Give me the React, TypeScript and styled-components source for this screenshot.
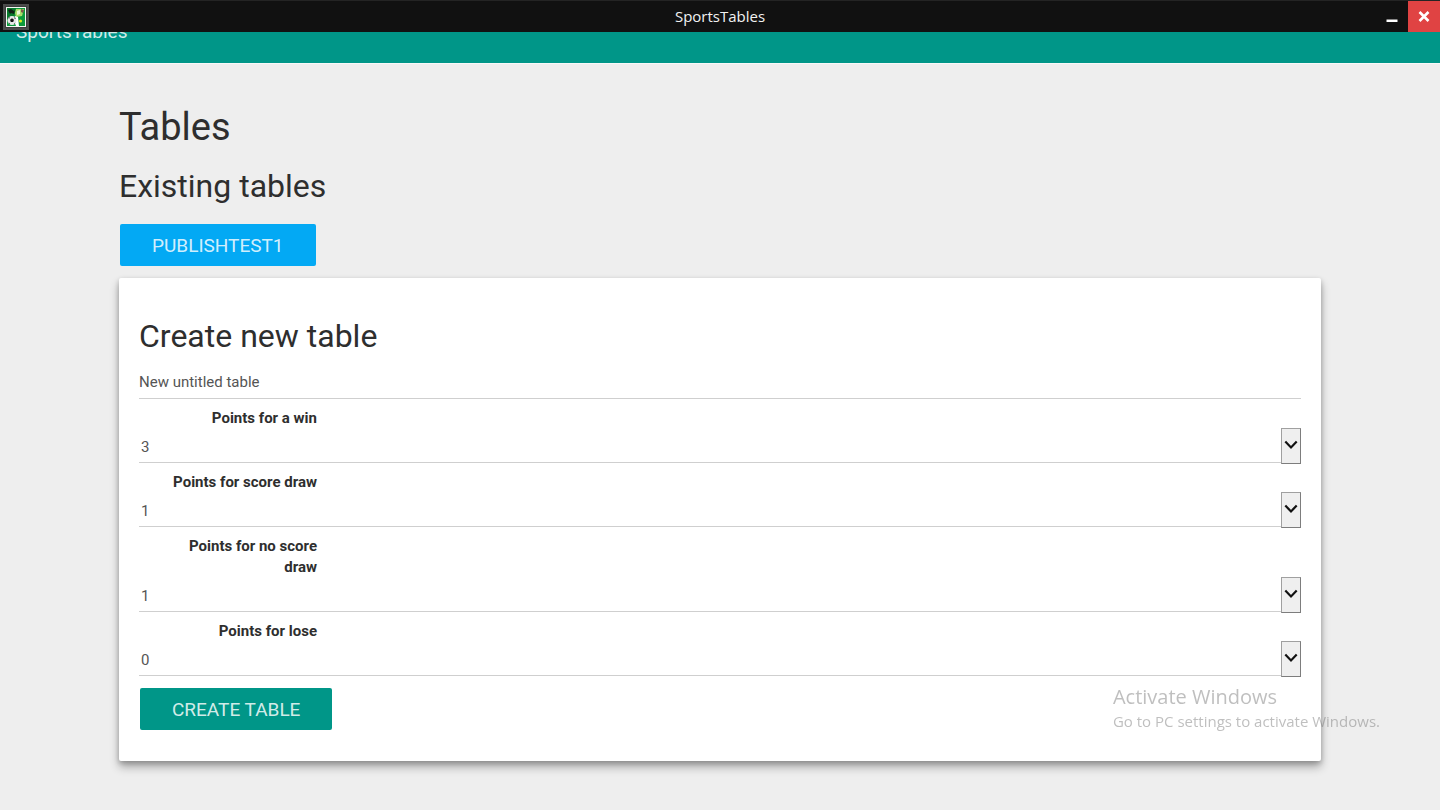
import React, { useId, useState } from "react";
import styled, { createGlobalStyle } from "styled-components";

const GlobalStyle = createGlobalStyle`
  *, *::before, *::after { box-sizing: border-box; }
  body {
    margin: 0;
    background: #eeeeee;
    color: #2e2e2e;
    font-family: Roboto, "Liberation Sans", sans-serif;
    font-size: 15px;
    line-height: 21px;
  }
`;

const TitleBar = styled.div`
  position: fixed;
  top: 0;
  left: 0;
  right: 0;
  z-index: 2;
  height: 32px;
  display: grid;
  grid-template-columns: 1fr auto 1fr;
  align-items: center;
  background: #111111;
  border-top: 1px solid #242424;
`;

const AppIcon = styled.svg`
  display: block;
  width: 26px;
  height: 26px;
  margin-left: 3px;
`;

const WindowTitle = styled.div`
  color: #f2f2f2;
  font-family: "Open Sans", "Noto Sans", sans-serif;
  font-size: 15px;
`;

const WindowControls = styled.div`
  display: flex;
  justify-content: flex-end;
`;

const WindowButton = styled.button<{ $close?: boolean }>`
  display: flex;
  align-items: center;
  justify-content: center;
  width: 32px;
  height: 31px;
  padding: 0;
  border: 0;
  color: #ffffff;
  background: ${(p) => (p.$close ? "#e04343" : "transparent")};
`;

const Header = styled.header`
  display: flex;
  align-items: center;
  height: 64px;
  padding: 0 16px;
  background: #009688;
  border-bottom: 1px solid #f8f8f8;
`;

const Brand = styled.a`
  color: rgba(255, 255, 255, 0.84);
  font-size: 19px;
  text-decoration: none;
`;

const Content = styled.main`
  max-width: 1242px;
  margin: 0 auto;
  padding: 42px 20px 48px;
`;

const PageTitle = styled.h1`
  margin: 0 0 20px;
  font-size: 38px;
  line-height: 42px;
  font-weight: 400;
`;

const SectionTitle = styled.h2`
  margin: 0;
  font-size: 32px;
  line-height: 36px;
  font-weight: 400;
`;

const RaisedButton = styled.button<{ $color: string }>`
  display: block;
  height: 42px;
  margin: 0 1px;
  padding: 0 32px;
  border: 0;
  border-radius: 2px;
  background: ${(p) => p.$color};
  color: rgba(255, 255, 255, 0.84);
  font-family: inherit;
  font-size: 19px;
  text-transform: uppercase;
`;

const TableList = styled.div`
  padding: 20px 0 12px;
`;

const Card = styled.form`
  padding: 40px 20px 31px;
  border-radius: 2px;
  background: #ffffff;
  box-shadow: 0 6px 10px 0 rgba(0, 0, 0, 0.3), 0 2px 5px 0 rgba(0, 0, 0, 0.2);
`;

const NameInput = styled.input`
  display: block;
  width: 100%;
  height: 35px;
  margin-top: 10px;
  padding: 2px 0 0;
  border: 0;
  border-bottom: 1px solid #cfcfcf;
  outline: 0;
  background: transparent;
  color: #555555;
  font-family: inherit;
  font-size: 15px;
`;

const Field = styled.div`
  padding-top: 9px;
`;

const FieldLabel = styled.label`
  display: block;
  width: 178px;
  padding-left: 20px;
  font-weight: 700;
  text-align: right;
`;

const SelectWrap = styled.div`
  position: relative;
`;

const PointsSelect = styled.select`
  display: block;
  appearance: none;
  width: 100%;
  height: 34px;
  padding: 2px 2px 0;
  border: 0;
  border-bottom: 1px solid #cfcfcf;
  border-radius: 0;
  outline: 0;
  background: transparent;
  color: #555555;
  font-family: inherit;
  font-size: 15px;
`;

const SelectArrow = styled.span`
  position: absolute;
  top: -1px;
  right: 0;
  display: flex;
  align-items: center;
  justify-content: center;
  width: 20px;
  height: 36px;
  border: 1px solid #a0a0a0;
  border-right-color: #7d7d7d;
  border-bottom-color: #7d7d7d;
  background: #efefef;
  pointer-events: none;
`;

const Actions = styled.div`
  padding-top: 12px;
`;

const Watermark = styled.aside`
  position: fixed;
  right: 60px;
  bottom: 77px;
  color: rgba(120, 120, 120, 0.47);
  font-family: "Open Sans", "Noto Sans", sans-serif;
  font-size: 15px;
  line-height: 24px;
  pointer-events: none;
`;

const WatermarkTitle = styled.div`
  font-size: 20px;
`;

function PointsField({ label, initial }: { label: string; initial: string }) {
  const id = useId();
  const [value, setValue] = useState(initial);
  return (
    <Field>
      <FieldLabel htmlFor={id}>{label}</FieldLabel>
      <SelectWrap>
        <PointsSelect id={id} value={value} onChange={(e) => setValue(e.target.value)}>
          {["0", "1", "2", "3"].map((n) => (
            <option key={n}>{n}</option>
          ))}
        </PointsSelect>
        <SelectArrow>
          <svg width="14" height="12" viewBox="0 0 14 12" fill="none" aria-hidden="true">
            <path d="M1.3 1.600 7 7.400 12.700 1.600" stroke="#111" strokeWidth="2.2" />
          </svg>
        </SelectArrow>
      </SelectWrap>
    </Field>
  );
}

const fields = [
  { label: "Points for a win", initial: "3" },
  { label: "Points for score draw", initial: "1" },
  { label: "Points for no score draw", initial: "1" },
  { label: "Points for lose", initial: "0" },
];

export default function App() {
  const [name, setName] = useState("New untitled table");
  return (
    <>
      <GlobalStyle />
      <TitleBar>
        <AppIcon viewBox="0 0 26 26" aria-hidden="true">
          <rect width="26" height="26" fill="#4b4b4b" />
          <rect x="2" y="2" width="22" height="22" fill="#3c3c3c" />
          <rect x="3" y="3" width="20" height="20" fill="#f4f8f2" />
          <rect x="4" y="4" width="18" height="18" fill="#0d9a3c" />
          <path d="M4 4h9l-2 9-7 3z" fill="#087a2c" />
          <path d="M13 5h8l-2 7-6 1-1-4z" fill="#a9dc6a" />
          <path d="M5 6l3-1 3 2 1-1-1 4-3-1-1 1z" fill="#102015" />
          <path d="M14 7l3-1v4l-3 1z" fill="#e9f7d6" />
          <path d="M18 5l3 1-1 3-2-1z" fill="#7c5a48" />
          <path d="M12 12l3 1 1 9h-3l-2-5z" fill="#ffffff" />
          <circle cx="9" cy="16.500" r="4.500" fill="#e8e8e8" />
          <path d="M9 14.300l2 1.500-.8 2.300H7.800L7 15.800zM5 14l1.500-1v1.500zM11.500 13l1.500 1.500-1.500.2zM5.500 18.500l1.500.8-.3 1zM12.500 18.500l-1.500 1 .2.800z" fill="#161616" />
          <circle cx="17.500" cy="17" r="1.600" fill="#d8ec1e" />
        </AppIcon>
        <WindowTitle>SportsTables</WindowTitle>
        <WindowControls>
          <WindowButton type="button" aria-label="Minimize">
            <svg width="12" height="12" viewBox="0 0 12 12" aria-hidden="true">
              <path d="M0.500 8.500h11v2.500h-11z" fill="currentColor" />
            </svg>
          </WindowButton>
          <WindowButton type="button" aria-label="Close" $close>
            <svg width="12" height="12" viewBox="0 0 12 12" aria-hidden="true">
              <path d="M1.500 1l9 9M10.500 1l-9 9" stroke="currentColor" strokeWidth="2.600" />
            </svg>
          </WindowButton>
        </WindowControls>
      </TitleBar>
      <Header>
        <Brand href="#">SportsTables</Brand>
      </Header>
      <Content>
        <PageTitle>Tables</PageTitle>
        <SectionTitle>Existing tables</SectionTitle>
        <TableList>
          <RaisedButton type="button" $color="#03a9f4">publishtest1</RaisedButton>
        </TableList>
        <Card onSubmit={(e) => e.preventDefault()}>
          <SectionTitle>Create new table</SectionTitle>
          <NameInput
            type="text"
            aria-label="Table name"
            value={name}
            onChange={(e) => setName(e.target.value)}
          />
          {fields.map((f) => (
            <PointsField key={f.label} {...f} />
          ))}
          <Actions>
            <RaisedButton type="submit" $color="#009688">Create table</RaisedButton>
          </Actions>
        </Card>
      </Content>
      <Watermark>
        <WatermarkTitle>Activate Windows</WatermarkTitle>
        Go to PC settings to activate Windows.
      </Watermark>
    </>
  );
}
